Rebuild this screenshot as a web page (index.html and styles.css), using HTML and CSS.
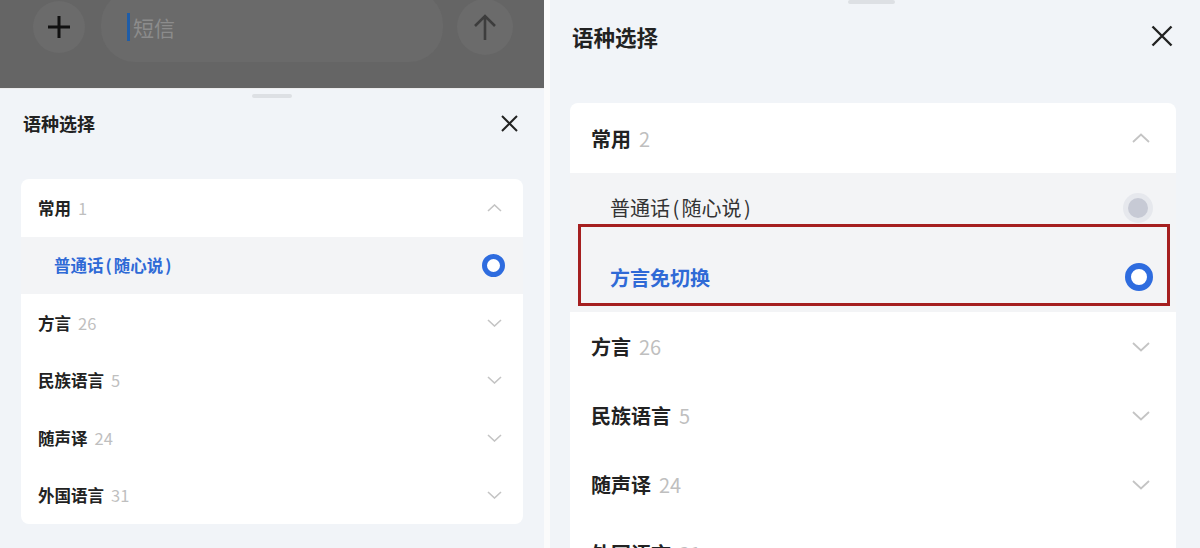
FILE: index.html
```html
<!DOCTYPE html>
<html lang="zh-CN">
<head>
    <meta charset="UTF-8">
    <meta name="viewport" content="width=device-width, initial-scale=1.0">
    <title>语种选择</title>
    <link rel="stylesheet" href="styles.css">
</head>
<body>
    <!-- left: sheet opened over the message bar -->
    <div class="screen left">
        <div class="chatbar">
            <div class="round-btn plus">
                <svg width="24" height="24" viewBox="0 0 24 24"><path d="M12 1v22M1 12h22" stroke="#111" stroke-width="3" fill="none"/></svg>
            </div>
            <div class="msg-input"><span class="caret"></span><span class="placeholder">短信</span></div>
            <div class="round-btn send">
                <svg width="26" height="28" viewBox="0 0 26 28"><path d="M13 27V3M3 13L13 3l10 10" stroke="#3d3d3d" stroke-width="2.6" fill="none"/></svg>
            </div>
        </div>
        <div class="sheet">
            <div class="handle"></div>
            <div class="sheet-head">
                <h2 class="sheet-title">语种选择</h2>
                <svg class="close" width="17" height="17" viewBox="0 0 17 17"><path d="M1 1l15 15M16 1L1 16" stroke="#222" stroke-width="2" fill="none"/></svg>
            </div>
            <div class="lang-card">
                <div class="group-row">
                    <span class="group-name">常用</span><span class="count">1</span>
                    <svg class="chev" width="15" height="8" viewBox="0 0 15 8"><path d="M1 7l6.5-6 6.5 6" stroke="#c4c4c4" stroke-width="1.6" fill="none"/></svg>
                </div>
                <div class="sub-list">
                    <div class="sub-row selected">
                        <span>普通话<span class="paren">(</span>随心说<span class="paren">)</span></span><span class="radio on"></span>
                    </div>
                </div>
                <div class="group-row">
                    <span class="group-name">方言</span><span class="count">26</span>
                    <svg class="chev" width="15" height="8" viewBox="0 0 15 8"><path d="M1 1l6.5 6 6.5-6" stroke="#c4c4c4" stroke-width="1.6" fill="none"/></svg>
                </div>
                <div class="group-row">
                    <span class="group-name">民族语言</span><span class="count">5</span>
                    <svg class="chev" width="15" height="8" viewBox="0 0 15 8"><path d="M1 1l6.5 6 6.5-6" stroke="#c4c4c4" stroke-width="1.6" fill="none"/></svg>
                </div>
                <div class="group-row">
                    <span class="group-name">随声译</span><span class="count">24</span>
                    <svg class="chev" width="15" height="8" viewBox="0 0 15 8"><path d="M1 1l6.5 6 6.5-6" stroke="#c4c4c4" stroke-width="1.6" fill="none"/></svg>
                </div>
                <div class="group-row">
                    <span class="group-name">外国语言</span><span class="count">31</span>
                    <svg class="chev" width="15" height="8" viewBox="0 0 15 8"><path d="M1 1l6.5 6 6.5-6" stroke="#c4c4c4" stroke-width="1.6" fill="none"/></svg>
                </div>
            </div>
        </div>
    </div>

    <div class="divider"></div>

    <!-- right: same sheet, enlarged, with the new option marked -->
    <div class="screen right">
        <div class="handle"></div>
        <div class="sheet-head">
            <h2 class="sheet-title">语种选择</h2>
            <svg class="close" width="22" height="22" viewBox="0 0 22 22"><path d="M1.5 1.5l19 19M20.5 1.5l-19 19" stroke="#222" stroke-width="2.4" fill="none"/></svg>
        </div>
        <div class="lang-card">
            <div class="group-row first">
                <span class="group-name">常用</span><span class="count">2</span>
                <svg class="chev" width="18" height="10" viewBox="0 0 18 10"><path d="M1 9l8-7.5 8 7.5" stroke="#c4c4c4" stroke-width="1.8" fill="none"/></svg>
            </div>
            <div class="sub-list">
                <div class="sub-row">
                    <span>普通话<span class="paren">(</span>随心说<span class="paren">)</span></span><span class="radio off"></span>
                </div>
                <div class="sub-row selected">
                    <span>方言免切换</span><span class="radio on"></span>
                </div>
                <div class="mark"></div>
            </div>
            <div class="group-row">
                <span class="group-name">方言</span><span class="count">26</span>
                <svg class="chev" width="18" height="10" viewBox="0 0 18 10"><path d="M1 1l8 7.5 8-7.5" stroke="#c4c4c4" stroke-width="1.8" fill="none"/></svg>
            </div>
            <div class="group-row">
                <span class="group-name">民族语言</span><span class="count">5</span>
                <svg class="chev" width="18" height="10" viewBox="0 0 18 10"><path d="M1 1l8 7.5 8-7.5" stroke="#c4c4c4" stroke-width="1.8" fill="none"/></svg>
            </div>
            <div class="group-row">
                <span class="group-name">随声译</span><span class="count">24</span>
                <svg class="chev" width="18" height="10" viewBox="0 0 18 10"><path d="M1 1l8 7.5 8-7.5" stroke="#c4c4c4" stroke-width="1.8" fill="none"/></svg>
            </div>
            <div class="group-row">
                <span class="group-name">外国语言</span><span class="count">31</span>
                <svg class="chev" width="18" height="10" viewBox="0 0 18 10"><path d="M1 1l8 7.5 8-7.5" stroke="#c4c4c4" stroke-width="1.8" fill="none"/></svg>
            </div>
        </div>
    </div>
</body>
</html>
```

FILE: styles.css
```css
body {
    margin: 0;
    height: 548px;
    display: flex;
    overflow: hidden;
    background: #fafafa;
    color: #222;
    font-family: "Noto Sans CJK SC", "Noto Sans", sans-serif;
}

.screen {
    display: flex;
    flex-direction: column;
    min-width: 0;
}

.screen > *,
.sheet > * {
    flex-shrink: 0;
}

.left {
    width: 544px;
}

.right {
    flex: 1;
    background: #f1f4f8;
}

.divider {
    width: 6px;
    background: #fbfbfb;
}

/* message bar under the dim overlay */
.chatbar {
    height: 89px;
    box-sizing: border-box;
    border-bottom: 1px solid #ececec;
    background: #656565;
    display: flex;
    align-items: flex-start;
    padding-left: 33px;
    overflow: hidden;
}

.round-btn {
    flex: none;
    border-radius: 50%;
    background: #6b6b6b;
    display: flex;
    align-items: center;
    justify-content: center;
}

.plus {
    width: 52px;
    height: 52px;
    margin-top: 1px;
}

.send {
    width: 56px;
    height: 56px;
    margin-top: -1px;
}

.msg-input {
    flex: none;
    width: 342px;
    height: 72px;
    margin: -10px 14px 0 16px;
    padding: 2px 0 0 26px;
    box-sizing: border-box;
    border-radius: 34px;
    background: #6a6a6a;
    display: flex;
    align-items: center;
}

.caret {
    width: 3px;
    height: 28px;
    background: #1f5da8;
}

.placeholder {
    margin-left: 3px;
    font-size: 21px;
    color: #8c8c8c;
}

/* sheet */
.sheet {
    flex: 1;
    background: #f1f4f8;
    display: flex;
    flex-direction: column;
}

.handle {
    height: 4px;
    border-radius: 2px;
    background: #dde0e4;
}

.left .handle {
    width: 40px;
    margin: 5px auto 0;
}

.right .handle {
    width: 47px;
    margin: 0 0 0 298px;
}

.sheet-head {
    display: flex;
    justify-content: space-between;
    align-items: center;
}

.sheet-title {
    margin: 0;
    font-weight: 700;
}

.left .sheet-head {
    height: 50px;
    padding: 0 26px 0 23px;
}

.left .sheet-title {
    font-size: 18px;
}

.right .sheet-head {
    height: 64px;
    padding: 0 27px 0 22px;
}

.right .sheet-title {
    font-size: 21.5px;
}

.lang-card {
    background: #fff;
    border-radius: 8px;
    overflow: hidden;
}

.left .lang-card {
    margin: 31px 21px 0;
}

.right .lang-card {
    margin: 35px 24px 0 20px;
}

.group-row {
    display: flex;
    align-items: center;
}

.group-name {
    font-weight: 700;
    color: #222;
}

.count {
    color: #bfbfbf;
}

.chev {
    margin-left: auto;
}

.left .group-row {
    height: 57.5px;
    padding: 0 21.5px 0 17px;
    font-size: 16.5px;
}

.left .count {
    margin-left: 7px;
}

.right .group-row {
    height: 69px;
    padding: 0 26.5px 0 21px;
    font-size: 20px;
}

.right .group-row.first {
    height: 70px;
}

.right .count {
    margin-left: 8px;
}

.sub-list {
    position: relative;
    background: #f3f4f6;
}

.sub-row {
    display: flex;
    align-items: center;
    justify-content: space-between;
    color: #333;
}

.sub-row.selected {
    color: #2f6ad6;
    font-weight: 700;
}

.paren {
    padding: 0 0.12em;
}

.left .sub-row {
    height: 57.5px;
    padding: 0 18.5px 0 33px;
    font-size: 16.5px;
}

.right .sub-row {
    height: 69.5px;
    padding: 0 23px 0 40px;
    font-size: 20px;
}

.radio {
    border-radius: 50%;
    box-sizing: border-box;
}

.radio.on {
    background: #fff;
    border: 6px solid #2e6cdf;
}

.left .radio.on {
    width: 23px;
    height: 23px;
    border-width: 5.5px;
}

.right .radio.on {
    width: 28px;
    height: 28px;
    border-width: 6.5px;
}

.radio.off {
    width: 20px;
    height: 20px;
    margin-right: 5px;
    background: #c7cad5;
    box-shadow: 0 0 0 5px #e6e8ed;
}

/* red annotation box around the new option */
.mark {
    position: absolute;
    left: 8px;
    right: 6px;
    top: 51px;
    height: 82px;
    border: 3px solid #a51f1f;
    box-sizing: border-box;
}
```
